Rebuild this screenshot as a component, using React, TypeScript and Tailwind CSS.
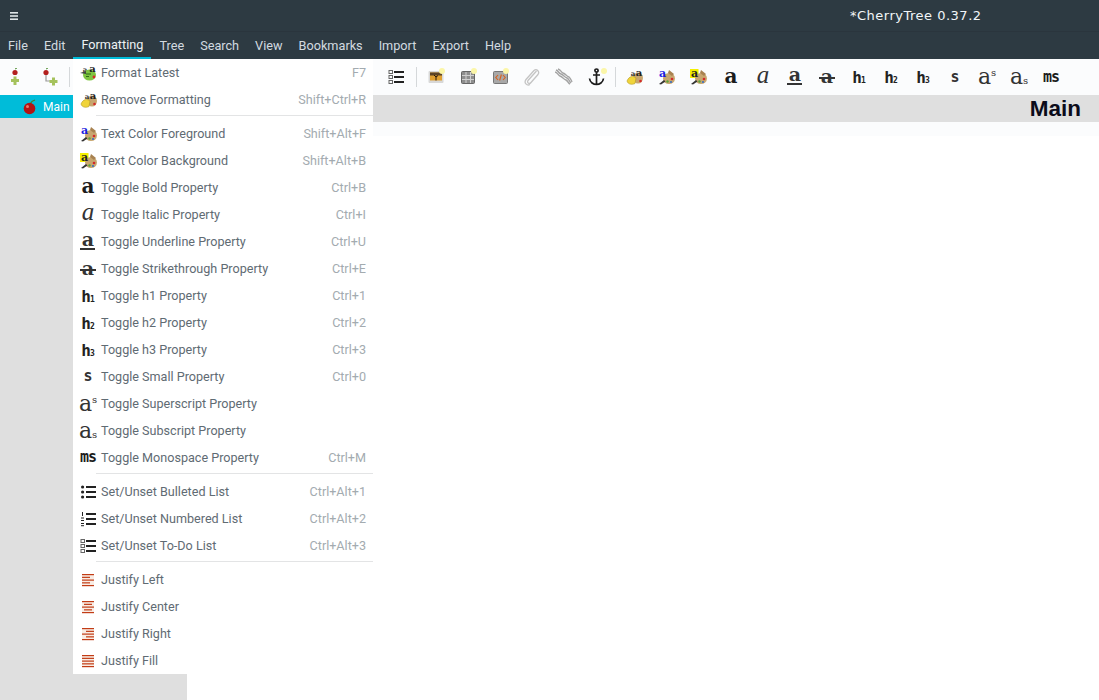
import React from "react";

const serif = "font-['Liberation_Serif',serif]";
const dserif = "font-['DejaVu_Serif',serif]";
const mono = "font-['DejaVu_Sans_Mono',monospace]";

function Letter({ children, className = "" }: { children: React.ReactNode; className?: string }) {
  return <span className={`flex h-4 w-4 items-center justify-center leading-none text-[#1c1c1c] ${className}`}>{children}</span>;
}

function BoldA() { return <Letter className={`${dserif} text-[20px] font-bold`}><span className="-mt-[3px]">a</span></Letter>; }
function ItalicA() { return <Letter className={`${serif} text-[25px] italic text-[#333]`}><span className="-mt-[6px]">a</span></Letter>; }
function UnderA() {
  return (
    <span className="relative flex h-4 w-4 justify-center">
      <span className={`${dserif} -mt-[2px] text-[19px] font-bold leading-[14px] text-[#333]`}>a</span>
      <span className="absolute bottom-0 left-0 h-[2px] w-[15px] bg-[#333]" />
    </span>
  );
}
function StrikeA() {
  return (
    <span className="relative flex h-4 w-4 justify-center">
      <span className={`${dserif} text-[19px] font-bold leading-[14px] text-[#333]`}>a</span>
      <span className="absolute left-0 top-[8px] h-[2px] w-[16px] bg-[#333]" />
    </span>
  );
}
function Heading({ n }: { n: string }) {
  return (
    <span className={`flex h-4 w-4 items-end justify-center leading-none text-[#222] ${mono} font-bold`}>
      <span className="text-[16px] leading-[15px]">h</span>
      <span className="-ml-[1px] text-[8px] leading-[9px]">{n}</span>
    </span>
  );
}
function SmallS() { return <Letter className={`${mono} text-[15px] font-bold text-[#333]`}>s</Letter>; }
function Sup() {
  return (
    <span className={`flex h-4 w-4 items-start justify-center leading-none text-[#333] ${dserif}`}>
      <span className="text-[22px] leading-[16px]">a</span>
      <span className="text-[10px] leading-[7px]">s</span>
    </span>
  );
}
function Sub() {
  return (
    <span className={`flex h-4 w-4 items-end justify-center leading-none text-[#333] ${dserif}`}>
      <span className="text-[22px] leading-[17px]">a</span>
      <span className="text-[10px] leading-[8px]">s</span>
    </span>
  );
}
function Mono() { return <Letter className={`${mono} text-[15px] font-bold tracking-[-1px]`}>ms</Letter>; }

function Palette({ letter, bg }: { letter: string; bg?: string }) {
  return (
    <svg width="18" height="16" viewBox="0 0 18 16" className="overflow-visible">
      {bg && <rect x="0" y="0" width="8.5" height="9" fill={bg} />}
      <ellipse cx="11" cy="9.5" rx="6" ry="5.5" fill="#c8a66f" />
      <path d="M11 1 L16 5 L14 7 L10 4Z" fill="#a88250" />
      <circle cx="14" cy="10" r="1.3" fill="#d32a2a" />
      <circle cx="9.5" cy="12.5" r="1.2" fill="#5aa63a" />
      <circle cx="13" cy="13" r="1.1" fill="#3a70c0" />
      <path d="M1 15 L6 11 L7.5 12.5 L3 15.5Z" fill="#333" />
      <text x="4.5" y="8" textAnchor="middle" fontFamily="DejaVu Serif" fontWeight="700" fontSize="11" fill={letter}>a</text>
    </svg>
  );
}
function Latest() {
  return (
    <svg width="18" height="16" viewBox="0 0 18 16" className="overflow-visible">
      <text x="5" y="7" textAnchor="middle" fontFamily="DejaVu Serif" fontWeight="700" fontSize="7" fill="#333">a</text>
      <ellipse cx="9.5" cy="10" rx="6.5" ry="5.5" fill="#7fc541" />
      <path d="M6 9h5M6 11.5h3" stroke="#2f6a16" strokeWidth="1" />
      <circle cx="14" cy="12" r="1.4" fill="#d32a2a" />
      <path d="M0 8 L6 6 L6 9Z" fill="#444" />
      <text x="12.5" y="7" textAnchor="middle" fontFamily="DejaVu Serif" fontWeight="700" fontSize="10" fill="#222">a</text>
    </svg>
  );
}
function Remove() {
  return (
    <svg width="18" height="16" viewBox="0 0 18 16" className="overflow-visible">
      <ellipse cx="12" cy="9" rx="5" ry="5.5" fill="#c8a66f" />
      <text x="7" y="7" textAnchor="middle" fontFamily="DejaVu Serif" fontWeight="700" fontSize="7" fill="#333">a</text>
      <text x="13" y="7" textAnchor="middle" fontFamily="DejaVu Serif" fontWeight="700" fontSize="10" fill="#222">a</text>
      <path d="M1 12 C3 7 7 6.5 10 9 L9 14.5 C6 16 2 15.5 1 12Z" fill="#f0d43a" stroke="#b59a1e" strokeWidth=".6" />
      <circle cx="14.5" cy="12" r="1.3" fill="#d32a2a" />
    </svg>
  );
}
function Bullets() {
  return (
    <svg width="18" height="16" viewBox="0 0 18 16" fill="#222">
      <circle cx="2.6" cy="3" r="1.6" /><circle cx="2.6" cy="8" r="1.6" /><circle cx="2.6" cy="13" r="1.6" />
      <rect x="6" y="2" width="10" height="2" /><rect x="6" y="7" width="10" height="2" /><rect x="6" y="12" width="10" height="2" />
    </svg>
  );
}
function Numbers() {
  return (
    <svg width="18" height="16" viewBox="0 0 18 16" fill="#222">
      <rect x="2" y="1" width="1" height="4" /><rect x="1" y="6.5" width="3" height="1" /><rect x="1" y="9" width="3" height="1" /><rect x="1" y="12" width="3" height="1" /><rect x="1" y="14.2" width="3" height="1" />
      <rect x="6" y="2" width="10" height="2" /><rect x="6" y="7" width="10" height="2" /><rect x="6" y="12" width="10" height="2" />
    </svg>
  );
}
function Todo() {
  return (
    <svg width="18" height="16" viewBox="0 0 18 16">
      <g fill="none" stroke="#666" strokeWidth="1"><rect x="1" y="1.5" width="3.5" height="3" /><rect x="1" y="6.5" width="3.5" height="3" /><rect x="1" y="11.5" width="3.5" height="3" /></g>
      <g fill="#222"><rect x="6" y="2" width="10" height="2" /><rect x="6" y="7" width="10" height="2" /><rect x="6" y="12" width="10" height="2" /></g>
    </svg>
  );
}
function Justify({ rows }: { rows: [number, number][] }) {
  return (
    <svg width="18" height="16" viewBox="0 0 18 16">
      <rect x="2" y="2" width="12" height="12" fill="#f8ece4" />
      {rows.map(([x, w], i) => (
        <rect key={i} x={x} y={2 + i * 2.75} width={w} height="1.2" fill="#c23c16" />
      ))}
    </svg>
  );
}
const jl: [number, number][] = [[2, 12], [2, 8], [2, 12], [2, 8], [2, 12]];
const jc: [number, number][] = [[2, 12], [4, 8], [2, 12], [4, 8], [2, 12]];
const jr: [number, number][] = [[2, 12], [6, 8], [2, 12], [6, 8], [2, 12]];
const jf: [number, number][] = [[2, 12], [2, 12], [2, 12], [2, 12], [2, 12]];

function Cherry({ branch }: { branch?: boolean }) {
  return (
    <svg width="18" height="18" viewBox="0 0 18 18">
      <circle cx={branch ? 5 : 9} cy="4.5" r="2.6" fill="#b3201e" />
      <path d={branch ? "M5 1 L7 0" : "M9 1 L11 0"} stroke="#4a8a2a" strokeWidth="1" />
      {branch ? (
        <>
          <path d="M5 7 V13 H10" fill="none" stroke="#999" strokeWidth="1.2" />
          <path d="M11 9.5h3v2.5h2.5v3H14v2.5h-3V15H8.5v-3H11z" fill="#a5c25c" />
        </>
      ) : (
        <path d="M7.5 8.5h3V11H13v3h-2.5v3h-3v-3H5v-3h2.5z" fill="#a5c25c" />
      )}
    </svg>
  );
}
function CherryFruit() {
  return (
    <svg width="16" height="16" viewBox="0 0 16 16">
      <path d="M8 5 C9 3 11 1.5 13 1" stroke="#4a7a20" strokeWidth="1.2" fill="none" />
      <circle cx="7.5" cy="9.5" r="5.8" fill="#b31313" />
      <circle cx="5.5" cy="7.5" r="1.5" fill="#e87a6a" />
    </svg>
  );
}
function ThumbNew({ children }: { children: React.ReactNode }) {
  return (
    <span className="relative flex h-4 w-[18px] items-center justify-center">
      {children}
      <span className="absolute right-0 top-[-1px] h-[6px] w-[6px] rounded-full bg-[#fbf6a8]" />
    </span>
  );
}
function ImageIcon() {
  return (
    <ThumbNew>
      <svg width="16" height="14" viewBox="0 0 16 14">
        <rect x=".5" y="1" width="15" height="12" rx="1" fill="#d8d8d8" />
        <rect x="2" y="2.5" width="12" height="8" fill="#e0a030" />
        <rect x="2" y="2.5" width="12" height="3" fill="#5b4326" />
        <path d="M8 10.5 V6 M8 7 L6 5 M8 7 L10 5.5" stroke="#2a1a08" strokeWidth="1" />
      </svg>
    </ThumbNew>
  );
}
function TableIcon() {
  return (
    <ThumbNew>
      <svg width="14" height="13" viewBox="0 0 14 13">
        <rect x=".5" y=".5" width="13" height="12" rx="1" fill="#8e8e8e" stroke="#666" />
        <path d="M1 4.5h12M1 8.5h12M5 1v11M9.5 1v11" stroke="#d0d0d0" strokeWidth="1" />
      </svg>
    </ThumbNew>
  );
}
function CodeIcon() {
  return (
    <ThumbNew>
      <svg width="15" height="13" viewBox="0 0 15 13">
        <rect x=".5" y=".5" width="14" height="12" rx="1" fill="#a8a8a8" stroke="#777" />
        <path d="M5 4 L2.8 6.5 L5 9M10 4 L12.2 6.5 L10 9M8.4 3.5 L6.6 9.5" fill="none" stroke="#d9601a" strokeWidth="1.1" />
      </svg>
    </ThumbNew>
  );
}
function Clip() {
  return (
    <svg width="18" height="18" viewBox="0 0 18 18" fill="none" stroke="#c4c4c4" strokeWidth="1.3">
      <path d="M13.5 3 L5 12.5 C3.5 15 6.5 16.5 8 14.5 L15 6.5 C17 3.5 13.5 0 11 2.5 L3 11.5 C0.5 15 4 18 7 16.5" />
    </svg>
  );
}
function Link() {
  return (
    <svg width="18" height="18" viewBox="0 0 18 18" fill="none" stroke="#a4a4a4" strokeWidth="1.4">
      <path d="M1 2 C4 3 3 5 6 6 C9 7 9 9 12 10 C14 11 14 13 16 15" />
      <path d="M3 1 C6 2 6 4 8 5 C11 6 11 8 14 9 C16 11 16 12 17 14" />
      <path d="M0 4 C3 5 3 7 5 8 C8 9 8 11 11 12 C13 13 13 15 15 16" />
    </svg>
  );
}
function Anchor() {
  return (
    <span className="relative flex h-4 w-[18px] items-center justify-center">
      <svg width="17" height="18" viewBox="0 0 17 18" fill="none" stroke="#1b1b1b" strokeWidth="1.7">
        <circle cx="8.5" cy="2.6" r="1.6" />
        <path d="M8.5 4.5V16.5M5 7h7M1.5 10.5 C2 14.5 5.5 16.5 8.5 16.5 C11.5 16.5 15 14.5 15.5 10.5" />
      </svg>
      <span className="absolute right-[-2px] top-[-1px] h-[6px] w-[6px] rounded-full bg-[#fbf6a8]" />
    </span>
  );
}

type Row = { icon: React.ReactNode; label: string; keys?: string } | "sep";
const rows: Row[] = [
  { icon: <Latest />, label: "Format Latest", keys: "F7" },
  { icon: <Remove />, label: "Remove Formatting", keys: "Shift+Ctrl+R" },
  "sep",
  { icon: <Palette letter="#1a1ae0" />, label: "Text Color Foreground", keys: "Shift+Alt+F" },
  { icon: <Palette letter="#222" bg="#f4f000" />, label: "Text Color Background", keys: "Shift+Alt+B" },
  { icon: <BoldA />, label: "Toggle Bold Property", keys: "Ctrl+B" },
  { icon: <ItalicA />, label: "Toggle Italic Property", keys: "Ctrl+I" },
  { icon: <UnderA />, label: "Toggle Underline Property", keys: "Ctrl+U" },
  { icon: <StrikeA />, label: "Toggle Strikethrough Property", keys: "Ctrl+E" },
  { icon: <Heading n="1" />, label: "Toggle h1 Property", keys: "Ctrl+1" },
  { icon: <Heading n="2" />, label: "Toggle h2 Property", keys: "Ctrl+2" },
  { icon: <Heading n="3" />, label: "Toggle h3 Property", keys: "Ctrl+3" },
  { icon: <SmallS />, label: "Toggle Small Property", keys: "Ctrl+0" },
  { icon: <Sup />, label: "Toggle Superscript Property" },
  { icon: <Sub />, label: "Toggle Subscript Property" },
  { icon: <Mono />, label: "Toggle Monospace Property", keys: "Ctrl+M" },
  "sep",
  { icon: <Bullets />, label: "Set/Unset Bulleted List", keys: "Ctrl+Alt+1" },
  { icon: <Numbers />, label: "Set/Unset Numbered List", keys: "Ctrl+Alt+2" },
  { icon: <Todo />, label: "Set/Unset To-Do List", keys: "Ctrl+Alt+3" },
  "sep",
  { icon: <Justify rows={jl} />, label: "Justify Left" },
  { icon: <Justify rows={jc} />, label: "Justify Center" },
  { icon: <Justify rows={jr} />, label: "Justify Right" },
  { icon: <Justify rows={jf} />, label: "Justify Fill" },
];

const menus = ["File", "Edit", "Formatting", "Tree", "Search", "View", "Bookmarks", "Import", "Export", "Help"];

function Tool({ children }: { children: React.ReactNode }) {
  return <span className="flex h-9 w-8 items-center justify-center">{children}</span>;
}
function Divider() {
  return <span className="mx-[3px] h-5 w-px bg-[#d5d8da]" />;
}

export default function App() {
  return (
    <div className="relative flex h-[700px] w-[1099px] flex-col overflow-hidden bg-white font-['Roboto',sans-serif] text-[12.6px]">
      <header className="relative flex h-8 items-center border-b border-[#2a353d] bg-[#2d3a42] pl-[10px]">
        <svg width="8" height="8" viewBox="0 0 8 8" fill="#dfe5e8"><rect width="8" height="1.6" /><rect y="3.2" width="8" height="1.6" /><rect y="6.4" width="8" height="1.6" /></svg>
        <span className="absolute left-[850px] top-[8px] font-['DejaVu_Sans',sans-serif] text-[13px] leading-4 tracking-[0.5px] text-[#f2f6f8]">*CherryTree 0.37.2</span>
      </header>
      <nav className="flex h-[27px] bg-[#2d3a42] text-[12.7px]">
        {menus.map((m) => (
          <span key={m} className={`flex items-center px-2 ${m === "Formatting" ? "border-b-[2px] border-[#00bcd9] text-[#eef2f4]" : "text-[#d3dae0]"}`}>{m}</span>
        ))}
      </nav>
      <div className="flex h-9 items-center bg-[#fbfcfd]">
        <span className="flex w-[30px] justify-center"><Cherry /></span>
        <span className="flex w-[39px] justify-center"><Cherry branch /></span>
        <span className="h-5 w-px bg-[#d5d8da]" />
        <span className="w-[311px]" />
        <Tool><Todo /></Tool>
        <Divider />
        <Tool><ImageIcon /></Tool>
        <Tool><TableIcon /></Tool>
        <Tool><CodeIcon /></Tool>
        <Tool><Clip /></Tool>
        <Tool><Link /></Tool>
        <Tool><Anchor /></Tool>
        <Divider />
        <Tool><Remove /></Tool>
        <Tool><Palette letter="#1a1ae0" /></Tool>
        <Tool><Palette letter="#222" bg="#f4f000" /></Tool>
        <Tool><BoldA /></Tool>
        <Tool><ItalicA /></Tool>
        <Tool><UnderA /></Tool>
        <Tool><StrikeA /></Tool>
        <Tool><Heading n="1" /></Tool>
        <Tool><Heading n="2" /></Tool>
        <Tool><Heading n="3" /></Tool>
        <Tool><SmallS /></Tool>
        <Tool><Sup /></Tool>
        <Tool><Sub /></Tool>
        <Tool><Mono /></Tool>
      </div>
      <div className="flex min-h-0 flex-1">
        <aside className="w-[187px] bg-[#dfdfdf]">
          <div className="flex h-[23px] items-center gap-[5px] bg-[#00bcd9] pl-[22px] text-[12px] text-white">
            <CherryFruit />
            <span className="pt-[1px]">Main</span>
          </div>
        </aside>
        <main className="flex-1">
          <div className="flex h-[27px] items-center justify-end bg-[#dfdfdf] pr-[18px] pt-[1px] font-['Liberation_Sans',sans-serif] text-[22.5px] font-bold leading-none text-[#0b0b1a]">Main</div>
          <div className="h-[14px] bg-[#fbfcfd]" />
        </main>
      </div>
      <div className="absolute left-[73px] top-[59px] w-[300px] bg-white">
        {rows.map((r, i) =>
          r === "sep" ? (
            <div key={i} className="h-[7px] pl-[23px] pt-[2px]"><div className="h-px w-full bg-[#e3e4e5]" /></div>
          ) : (
            <div key={i} className="flex h-[27px] items-center px-[7px] text-[#5f6b73]">
              <span className="flex w-[21px] justify-start">{r.icon}</span>
              <span className="flex-1 pt-[2px]">{r.label}</span>
              {r.keys && <span className="pt-[2px] text-[#a3abb0]">{r.keys}</span>}
            </div>
          )
        )}
      </div>
    </div>
  );
}
